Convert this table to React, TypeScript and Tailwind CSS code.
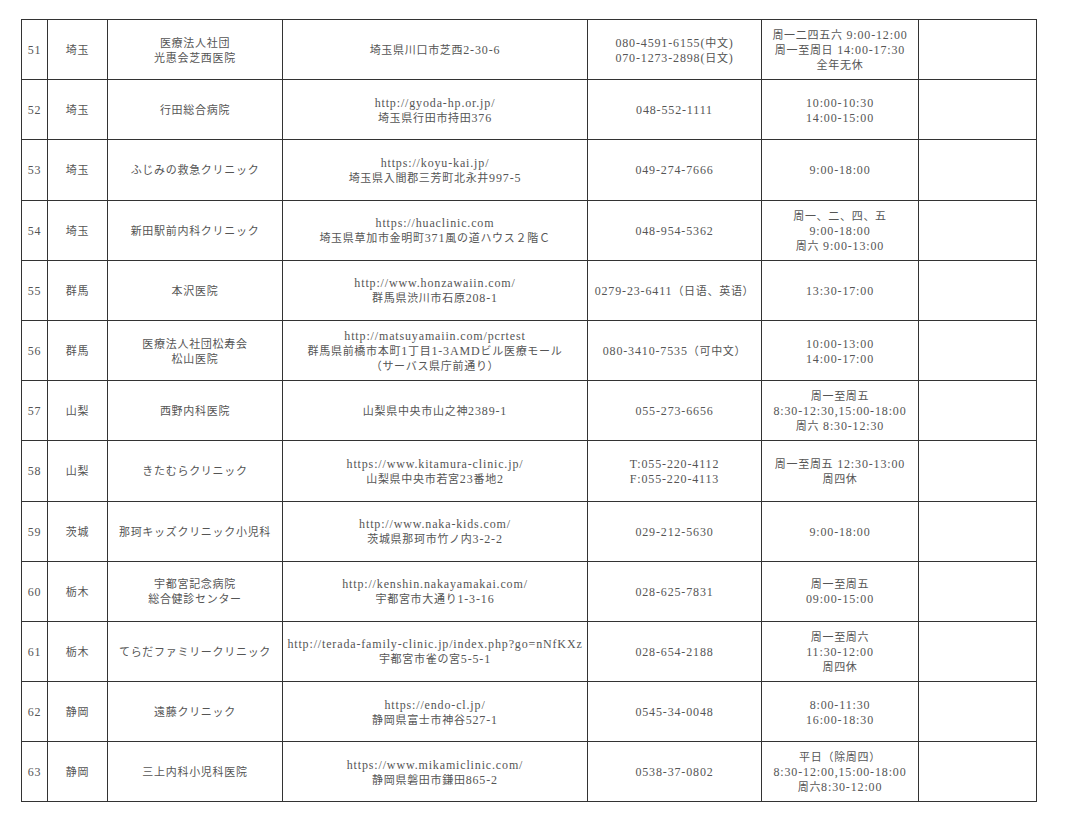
import React from "react";

type Row = {
  no: string;
  pref: string;
  name: string[];
  addr: string[];
  tel: string[];
  hours: string[];
};

const rows: Row[] = [
  { no: "51", pref: "埼玉", name: ["医療法人社団", "光惠会芝西医院"], addr: ["埼玉県川口市芝西2-30-6"], tel: ["080-4591-6155(中文)", "070-1273-2898(日文)"], hours: ["周一二四五六 9:00-12:00", "周一至周日 14:00-17:30", "全年无休"] },
  { no: "52", pref: "埼玉", name: ["行田総合病院"], addr: ["http://gyoda-hp.or.jp/", "埼玉県行田市持田376"], tel: ["048-552-1111"], hours: ["10:00-10:30", "14:00-15:00"] },
  { no: "53", pref: "埼玉", name: ["ふじみの救急クリニック"], addr: ["https://koyu-kai.jp/", "埼玉県入間郡三芳町北永井997-5"], tel: ["049-274-7666"], hours: ["9:00-18:00"] },
  { no: "54", pref: "埼玉", name: ["新田駅前内科クリニック"], addr: ["https://huaclinic.com", "埼玉県草加市金明町371風の道ハウス２階Ｃ"], tel: ["048-954-5362"], hours: ["周一、二、四、五", "9:00-18:00", "周六 9:00-13:00"] },
  { no: "55", pref: "群馬", name: ["本沢医院"], addr: ["http://www.honzawaiin.com/", "群馬県渋川市石原208-1"], tel: ["0279-23-6411（日语、英语）"], hours: ["13:30-17:00"] },
  { no: "56", pref: "群馬", name: ["医療法人社団松寿会", "松山医院"], addr: ["http://matsuyamaiin.com/pcrtest", "群馬県前橋市本町1丁目1-3AMDビル医療モール", "（サーバス県庁前通り）"], tel: ["080-3410-7535（可中文）"], hours: ["10:00-13:00", "14:00-17:00"] },
  { no: "57", pref: "山梨", name: ["西野内科医院"], addr: ["山梨県中央市山之神2389-1"], tel: ["055-273-6656"], hours: ["周一至周五", "8:30-12:30,15:00-18:00", "周六 8:30-12:30"] },
  { no: "58", pref: "山梨", name: ["きたむらクリニック"], addr: ["https://www.kitamura-clinic.jp/", "山梨県中央市若宮23番地2"], tel: ["T:055-220-4112", "F:055-220-4113"], hours: ["周一至周五 12:30-13:00", "周四休"] },
  { no: "59", pref: "茨城", name: ["那珂キッズクリニック小児科"], addr: ["http://www.naka-kids.com/", "茨城県那珂市竹ノ内3-2-2"], tel: ["029-212-5630"], hours: ["9:00-18:00"] },
  { no: "60", pref: "栃木", name: ["宇都宮記念病院", "総合健診センター"], addr: ["http://kenshin.nakayamakai.com/", "宇都宮市大通り1-3-16"], tel: ["028-625-7831"], hours: ["周一至周五", "09:00-15:00"] },
  { no: "61", pref: "栃木", name: ["てらだファミリークリニック"], addr: ["http://terada-family-clinic.jp/index.php?go=nNfKXz", "宇都宮市雀の宮5-5-1"], tel: ["028-654-2188"], hours: ["周一至周六", "11:30-12:00", "周四休"] },
  { no: "62", pref: "静岡", name: ["遠藤クリニック"], addr: ["https://endo-cl.jp/", "静岡県富士市神谷527-1"], tel: ["0545-34-0048"], hours: ["8:00-11:30", "16:00-18:30"] },
  { no: "63", pref: "静岡", name: ["三上内科小児科医院"], addr: ["https://www.mikamiclinic.com/", "静岡県磐田市鎌田865-2"], tel: ["0538-37-0802"], hours: ["平日（除周四）", "8:30-12:00,15:00-18:00", "周六8:30-12:00"] },
];

const CJK = /([\u3000-\u30ff\u4e00-\u9fff\uff00-\uffef]+)/;

// split a line into CJK and latin runs, the two scripts get different size and spacing
const Line = ({ text }: { text: string }) => {
  const parts = text.split(CJK).filter(Boolean);
  return (
    <div className="whitespace-nowrap leading-[14px]">
      {parts.map((p, i) =>
        CJK.test(p) ? (
          <span key={i} className="text-[11px] tracking-[0.7px]">{p}</span>
        ) : (
          <span key={i} className="text-[12px] tracking-[0.85px]">{p}</span>
        )
      )}
    </div>
  );
};

const Cell = ({ lines }: { lines: string[] }) => (
  <td className="border border-[#333] text-center align-middle overflow-hidden p-0">
    {lines.map((l, i) => (
      <Line key={i} text={l} />
    ))}
  </td>
);

export default function App() {
  return (
    <div className="w-[1080px] h-[820px] bg-white pt-[19px] pl-[21px] font-['Liberation_Serif','Noto_Sans_CJK_JP',serif] text-[#555]">
      <table className="table-fixed border-collapse w-[1015px] border border-[#555]">
        <colgroup>
          <col className="w-[26px]" />
          <col className="w-[60px]" />
          <col className="w-[175px]" />
          <col className="w-[305px]" />
          <col className="w-[174px]" />
          <col className="w-[157px]" />
          <col className="w-[118px]" />
        </colgroup>
        <tbody>
          {rows.map((r) => (
            <tr key={r.no} className="h-[60.2px]">
              <Cell lines={[r.no]} />
              <Cell lines={[r.pref]} />
              <Cell lines={r.name} />
              <Cell lines={r.addr} />
              <Cell lines={r.tel} />
              <Cell lines={r.hours} />
              <td className="border border-[#333] p-0" />
            </tr>
          ))}
        </tbody>
      </table>
    </div>
  );
}
